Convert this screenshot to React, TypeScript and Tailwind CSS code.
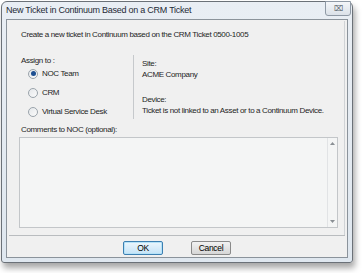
import React, { useState } from "react";

const font = { fontFamily: '"Liberation Sans", Arial, sans-serif' };

function Radio({ checked, label, onClick }: { checked: boolean; label: string; onClick: () => void }) {
  return (
    <div className="flex items-center gap-[4px] h-[19px] cursor-pointer" onClick={onClick}>
      <span className="w-[10px] h-[10px] shrink-0 rounded-full border border-[#9aa3ab] bg-gradient-to-br from-[#e4e7ea] to-[#fbfbfb] flex items-center justify-center">
        {checked && <span className="w-[5px] h-[5px] rounded-full bg-[#1d4f91]" />}
      </span>
      <span className="whitespace-nowrap">{label}</span>
    </div>
  );
}

function App() {
  const [assign, setAssign] = useState("noc");
  const [comments, setComments] = useState("");

  return (
    <div className="w-[362px] h-[273px] bg-white pt-[1px] pl-[1px]" style={font}>
      <div className="w-[352px] h-[262px] rounded-t-[6px] rounded-b-[3px] border border-[#6b7178] bg-gradient-to-b from-[#e9eef4] to-[#dfe7ef] shadow-[2px_5px_6px_rgba(0,0,0,0.35)] flex flex-col">
        <div className="h-[17px] shrink-0 flex items-start justify-between pl-[4px] pr-[1px]">
          <span className="text-[9px] tracking-[-0.25px] text-[#1f2a36] leading-[17px]">New Ticket in Continuum Based on a CRM Ticket</span>
          <button className="w-[26px] h-[15px] mt-[-1px] border border-[#8f99a5] rounded-b-[3px] bg-gradient-to-b from-[#f4f6f9] to-[#dbe1e8] flex items-center justify-center text-[#5d6670] text-[8px] leading-none">
            ⌧
          </button>
        </div>
        <div className="flex-1 mx-[4px] mb-[4px] border border-[#8b939b] bg-[#f0f0f0] flex flex-col">
          <div className="h-[214px] shrink-0 mx-[2px] mt-[1px] border-r border-[#d0d3d6] flex flex-col text-[8px] tracking-[-0.35px] text-[#1e1e1e]">
            <div className="pl-[12px] pt-[8px] h-[34px] leading-[12px]">Create a new ticket in Continuum based on the CRM Ticket 0500-1005</div>
            <div className="flex">
              <div className="w-[125px] shrink-0 pl-[12px] border-r border-[#c6c9cc] h-[64px]">
                <div className="h-[12px] leading-[12px] mb-[-3px]">Assign to :</div>
                <div className="pl-[7px]">
                  <Radio checked={assign === "noc"} label="NOC Team" onClick={() => setAssign("noc")} />
                  <Radio checked={assign === "crm"} label="CRM" onClick={() => setAssign("crm")} />
                  <Radio checked={assign === "vsd"} label="Virtual Service Desk" onClick={() => setAssign("vsd")} />
                </div>
              </div>
              <div className="pl-[8px] pt-[3px] whitespace-nowrap">
                <div className="leading-[11px]">Site:</div>
                <div className="leading-[11px]">ACME Company</div>
                <div className="leading-[11px] mt-[14px]">Device:</div>
                <div className="leading-[11px]">Ticket is not linked to an Asset or to a Continuum Device.</div>
              </div>
            </div>
            <div className="pl-[12px] mt-[5px] leading-[12px]">Comments to NOC (optional):</div>
            <div className="ml-[10px] mr-[6px] mt-[1px] h-[91px] border border-[#c3c6c9] bg-[#f4f5f5] flex">
              <textarea
                value={comments}
                onChange={(e) => setComments(e.target.value)}
                className="flex-1 bg-transparent resize-none outline-none p-[2px] text-[9px]"
              />
              <div className="w-[10px] border-l border-[#e1e3e5] flex flex-col items-center justify-between py-[4px] text-[#8a8f94]">
                <svg width="5" height="3" viewBox="0 0 5 3"><path d="M0 3 L2.5 0 L5 3 Z" fill="currentColor" /></svg>
                <svg width="5" height="3" viewBox="0 0 5 3"><path d="M0 0 L2.5 3 L5 0 Z" fill="currentColor" /></svg>
              </div>
            </div>
            <div className="flex-1" />
          </div>
          <div className="mx-[2px] border-t border-[#b9bcbf]" />
          <div className="flex-1 flex items-start justify-center gap-[28px] pt-[5px] text-[8.5px] tracking-[-0.3px]">
            <button className="w-[40px] h-[14px] rounded-[2px] border border-[#3c7fb1] bg-gradient-to-b from-[#ecf6fd] to-[#c4e3f7] shadow-[inset_0_0_0_1px_#b5e2f8] leading-none">
              OK
            </button>
            <button className="w-[40px] h-[14px] rounded-[2px] border border-[#8a8a8a] bg-gradient-to-b from-[#f2f2f2] to-[#d6d6d6] leading-none">
              Cancel
            </button>
          </div>
        </div>
      </div>
    </div>
  );
}

export default App;
